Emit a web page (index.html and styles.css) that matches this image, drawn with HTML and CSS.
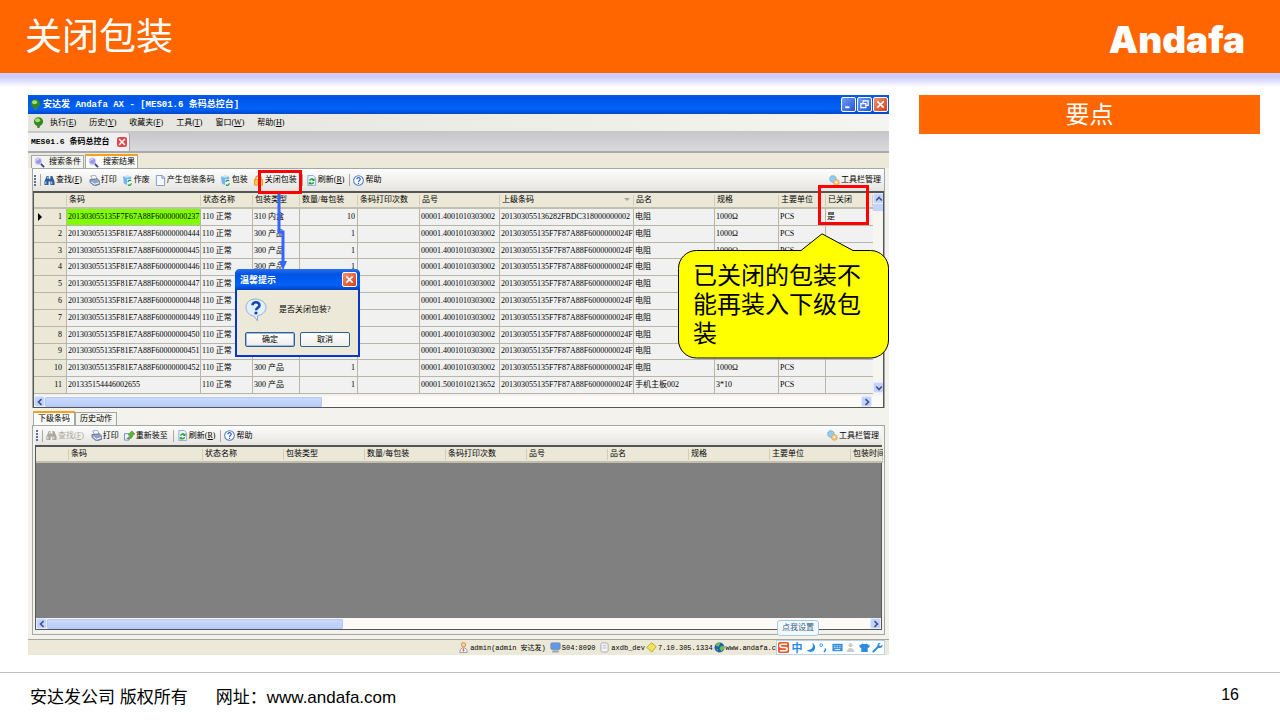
FILE: index.html
```html
<!DOCTYPE html>
<html lang="zh-CN">
<head>
    <meta charset="UTF-8">
    <meta name="viewport" content="width=device-width, initial-scale=1.0">
    <title>关闭包装</title>
    <link rel="stylesheet" href="styles.css">
</head>
<body>
    <!-- Icon definitions -->
    <svg class="defs" aria-hidden="true">
        <symbol id="i-leaf" viewBox="0 0 12 12"><ellipse cx="6" cy="5" rx="5" ry="4.8" fill="#2e8b1c"/><ellipse cx="5" cy="3.6" rx="2.8" ry="2.2" fill="#a5e06a"/><path d="M4 9h4l-1 3H5z" fill="#557744"/></symbol>
        <symbol id="i-lens" viewBox="0 0 12 12"><path d="M7 7l4 4" stroke="#3b3f9a" stroke-width="2"/><circle cx="4.8" cy="4.5" r="3.4" fill="#9c96ea" stroke="#d0cdf4" stroke-width="1.2"/><path d="M3 4a2 2 0 0 1 2-1.600" stroke="#fff" fill="none"/></symbol>
        <symbol id="i-find" viewBox="0 0 12 12"><path d="M3 1h2v3h2V1h2l2.500 6v4H7V7H5v4H.5V7z" fill="currentColor"/><path d="M2 7v3M8.500 7v3M4 2v2" stroke="#fff" stroke-width=".8"/></symbol>
        <symbol id="i-print" viewBox="0 0 12 12"><path d="M2 1l5-.5 2 4-5 1z" fill="#fff" stroke="#7d93bb" stroke-width=".8"/><path d="M1 5l8-1 3 3v3l-6 2-5-4z" fill="#8fa3c4" stroke="#4a5d7c" stroke-width=".7"/><path d="M2.500 7.500L6 10l5-1.500" fill="none" stroke="#fff"/></symbol>
        <symbol id="i-box" viewBox="0 0 12 12"><path d="M1 2l5-1.500L10 2v5l-5 4-3-2z" fill="#75b5ee"/><path d="M1 2l4 1 5-1-4-1.500z" fill="#c9e6ff"/><path d="M5.500 4.500H11V12H5.500z" fill="#e6f7ec"/><path d="M10 6.500a2 2 0 0 0-3.500 1M6.500 10.500a2 2 0 0 0 3.500-1.500" stroke="#21944a" fill="none" stroke-width="1.400"/></symbol>
        <symbol id="i-page" viewBox="0 0 12 12"><path d="M1.500.5H8L10.500 3v8.500h-9z" fill="#f4f9ff" stroke="#7b96c8"/><path d="M7.500.5V3.500h3" fill="#c7dcf7" stroke="#7b96c8"/></symbol>
        <symbol id="i-lock" viewBox="0 0 12 12"><path d="M3 6V4a3 3 0 0 1 6 0v2" fill="none" stroke="#d6a13c" stroke-width="1.500"/><rect x="1.500" y="5" width="9" height="6" fill="#ffc24a" stroke="#e29a28"/></symbol>
        <symbol id="i-refresh" viewBox="0 0 12 12"><path d="M2 .5h6L10.500 3v8.500H2z" fill="#e8f1fc" stroke="#8ea8d0"/><path d="M8.500 5.500a2.500 2.500 0 0 0-4.500.7M3.800 8.500a2.500 2.500 0 0 0 4.500-.7" stroke="#1ea033" fill="none" stroke-width="1.500"/><path d="M9.300 3.500v3H6.500zM3 10.800v-3h2.800z" fill="#1ea033"/></symbol>
        <symbol id="i-help" viewBox="0 0 12 12"><circle cx="6" cy="6" r="5.300" fill="#fff" stroke="#4c79c6" stroke-width="1.100"/><path d="M4.200 4.700c0-2.400 3.800-2.300 3.700 0C7.800 6 6 6 6 7.500M6 8.400v1.400" fill="none" stroke="#2b5fc0" stroke-width="1.300"/></symbol>
        <symbol id="i-gears" viewBox="0 0 12 12"><circle cx="4.300" cy="4.300" r="3.600" fill="#8fcdf2" stroke="#5ba5d8" stroke-dasharray="1.600 .8"/><circle cx="8" cy="8" r="3.200" fill="#f3c57c" stroke="#d49a48" stroke-dasharray="1.600 .8"/><circle cx="8" cy="8" r="1.100" fill="#fff"/></symbol>
        <symbol id="i-move" viewBox="0 0 12 12"><path d="M.5 4h5v7h-5z" fill="#eef5ff" stroke="#6887bd"/><path d="M3 9c3 0 4-2 4-4H5l3.500-4L12 4.500h-2C10 8 7 10.500 3 9z" fill="#59bb2c" stroke="#2f8116" stroke-width=".6"/></symbol>
        <symbol id="i-user" viewBox="0 0 12 12"><circle cx="6" cy="3" r="2.400" fill="#f7d3a5" stroke="#d88a3c"/><path d="M2 11.500c0-7 8-7 8 0z" fill="#f7f7ff" stroke="#8d97b8"/><path d="M6 6l1 3-1 2-1-2z" fill="#e2711f"/></symbol>
        <symbol id="i-pc" viewBox="0 0 12 12"><rect x="1" y="1" width="10" height="7" rx="1" fill="#5d9ae8" stroke="#7a8aa8"/><path d="M3 9h6l1 2.500H2z" fill="#9aa6ba"/></symbol>
        <symbol id="i-db" viewBox="0 0 12 12"><rect x="2" y="1" width="8" height="10" rx="2" fill="#f4f4f4" stroke="#a9a9ae"/><path d="M4 4h4M4 6.500h4" stroke="#b6b9c4"/></symbol>
        <symbol id="i-tag" viewBox="0 0 12 12"><path d="M6 .8L11.200 5 6.500 11 .8 6z" fill="#eee55c" stroke="#b6a72c"/></symbol>
        <symbol id="i-globe" viewBox="0 0 12 12"><circle cx="6" cy="6" r="5.500" fill="#1f5fae"/><path d="M2 3c2-3 5-2 5-1L5 5 3 5zM7 5l4-1v4l-3 2-2-3zM2 7l2 1v2z" fill="#6cc04c"/></symbol>
        <symbol id="i-left" viewBox="0 0 8 8"><path d="M5.500 1.200L2.500 4l3 2.800" fill="none" stroke="#3d5485" stroke-width="1.600"/></symbol>
        <symbol id="i-right" viewBox="0 0 8 8"><path d="M2.500 1.200L5.500 4l-3 2.800" fill="none" stroke="#3d5485" stroke-width="1.600"/></symbol>
        <symbol id="i-up" viewBox="0 0 8 8"><path d="M1.200 5.500L4 2.500l2.800 3" fill="none" stroke="#3d5485" stroke-width="1.600"/></symbol>
        <symbol id="i-down" viewBox="0 0 8 8"><path d="M1.200 2.500L4 5.500l2.800-3" fill="none" stroke="#3d5485" stroke-width="1.600"/></symbol>
        <symbol id="i-close" viewBox="0 0 12 12"><path d="M2.500 2.500l7 7M9.500 2.500l-7 7" stroke="#fff" stroke-width="1.800"/></symbol>
        <symbol id="i-min" viewBox="0 0 12 12"><path d="M2.500 9h4.500" stroke="#fff" stroke-width="2"/></symbol>
        <symbol id="i-restore" viewBox="0 0 12 12"><path d="M4.500 4V2h5.500v5H8M2 5h5.500v4.500H2z" fill="none" stroke="#fff" stroke-width="1.300"/></symbol>
    </svg>

    <header class="slide-header">
        <h1>关闭包装</h1>
        <span class="brand">Andafa</span>
    </header>

    <main class="slide-body">
        <section class="app">
            <div class="titlebar">
                <svg class="icon"><use href="#i-leaf"/></svg>
                <span class="app-title">安达发 Andafa AX - [MES01.6 条码总控台]</span>
                <button class="win-btn" aria-label="最小化"><svg><use href="#i-min"/></svg></button>
                <button class="win-btn" aria-label="还原"><svg><use href="#i-restore"/></svg></button>
                <button class="win-btn close" aria-label="关闭"><svg><use href="#i-close"/></svg></button>
            </div>

            <nav class="menubar">
                <svg class="icon"><use href="#i-leaf"/></svg>
                <button>执行(<u>E</u>)</button>
                <button>历史(<u>Y</u>)</button>
                <button>收藏夹(<u>F</u>)</button>
                <button>工具(<u>T</u>)</button>
                <button>窗口(<u>W</u>)</button>
                <button>帮助(<u>H</u>)</button>
            </nav>

            <div class="doc-tabs">
                <div class="doc-tab">
                    <span>MES01.6 条码总控台</span>
                    <button class="tab-close" aria-label="关闭标签"><svg><use href="#i-close"/></svg></button>
                </div>
            </div>

            <div class="view-tabs">
                <button class="tab"><svg class="icon"><use href="#i-lens"/></svg>搜索条件</button>
                <button class="tab active"><svg class="icon"><use href="#i-lens"/></svg>搜索结果</button>
            </div>

            <div class="panel">
                <div class="toolbar">
                    <span class="grip"></span>
                    <span class="sep"></span>
                    <button class="find"><svg class="icon"><use href="#i-find"/></svg>查找(<u>F</u>)</button>
                    <button><svg class="icon"><use href="#i-print"/></svg>打印</button>
                    <button><svg class="icon"><use href="#i-box"/></svg>作废</button>
                    <button><svg class="icon"><use href="#i-page"/></svg>产生包装条码</button>
                    <button><svg class="icon"><use href="#i-box"/></svg>包装</button>
                    <button><svg class="icon"><use href="#i-lock"/></svg>关闭包装</button>
                    <span class="sep"></span>
                    <button><svg class="icon"><use href="#i-refresh"/></svg>刷新(<u>R</u>)</button>
                    <span class="sep"></span>
                    <button><svg class="icon"><use href="#i-help"/></svg>帮助</button>
                    <button class="manage"><svg class="icon"><use href="#i-gears"/></svg>工具栏管理</button>
                </div>
                <div class="grid">
                    <div class="grid-main">
                        <table class="data">
                            <colgroup>
                                <col class="c-no"><col class="c-code"><col class="c-state"><col class="c-type"><col class="c-qty"><col class="c-print">
                                <col class="c-item"><col class="c-parent"><col class="c-name"><col class="c-spec"><col class="c-unit"><col class="c-closed">
                            </colgroup>
                            <thead>
                                <tr><th></th><th>条码</th><th>状态名称</th><th>包装类型</th><th>数量/每包装</th><th>条码打印次数</th><th>品号</th><th class="sorted">上级条码</th><th>品名</th><th>规格</th><th>主要单位</th><th>已关闭</th></tr>
                            </thead>
                            <tbody>
                                <tr class="current"><td>1</td><td>201303055135F7F67A88F60000000237</td><td>110 正常</td><td>310 内盒</td><td>10</td><td></td><td>00001.4001010303002</td><td>201303055136282FBDC318000000002</td><td>电阻</td><td>1000Ω</td><td>PCS</td><td>是</td></tr>
                                <tr><td>2</td><td>201303055135F81E7A88F60000000444</td><td>110 正常</td><td>300 产品</td><td>1</td><td></td><td>00001.4001010303002</td><td>201303055135F7F87A88F6000000024F</td><td>电阻</td><td>1000Ω</td><td>PCS</td><td></td></tr>
                                <tr><td>3</td><td>201303055135F81E7A88F60000000445</td><td>110 正常</td><td>300 产品</td><td>1</td><td></td><td>00001.4001010303002</td><td>201303055135F7F87A88F6000000024F</td><td>电阻</td><td>1000Ω</td><td>PCS</td><td></td></tr>
                                <tr><td>4</td><td>201303055135F81E7A88F60000000446</td><td>110 正常</td><td>300 产品</td><td>1</td><td></td><td>00001.4001010303002</td><td>201303055135F7F87A88F6000000024F</td><td>电阻</td><td>1000Ω</td><td>PCS</td><td></td></tr>
                                <tr><td>5</td><td>201303055135F81E7A88F60000000447</td><td>110 正常</td><td>300 产品</td><td>1</td><td></td><td>00001.4001010303002</td><td>201303055135F7F87A88F6000000024F</td><td>电阻</td><td>1000Ω</td><td>PCS</td><td></td></tr>
                                <tr><td>6</td><td>201303055135F81E7A88F60000000448</td><td>110 正常</td><td>300 产品</td><td>1</td><td></td><td>00001.4001010303002</td><td>201303055135F7F87A88F6000000024F</td><td>电阻</td><td>1000Ω</td><td>PCS</td><td></td></tr>
                                <tr><td>7</td><td>201303055135F81E7A88F60000000449</td><td>110 正常</td><td>300 产品</td><td>1</td><td></td><td>00001.4001010303002</td><td>201303055135F7F87A88F6000000024F</td><td>电阻</td><td>1000Ω</td><td>PCS</td><td></td></tr>
                                <tr><td>8</td><td>201303055135F81E7A88F60000000450</td><td>110 正常</td><td>300 产品</td><td>1</td><td></td><td>00001.4001010303002</td><td>201303055135F7F87A88F6000000024F</td><td>电阻</td><td>1000Ω</td><td>PCS</td><td></td></tr>
                                <tr><td>9</td><td>201303055135F81E7A88F60000000451</td><td>110 正常</td><td>300 产品</td><td>1</td><td></td><td>00001.4001010303002</td><td>201303055135F7F87A88F6000000024F</td><td>电阻</td><td>1000Ω</td><td>PCS</td><td></td></tr>
                                <tr><td>10</td><td>201303055135F81E7A88F60000000452</td><td>110 正常</td><td>300 产品</td><td>1</td><td></td><td>00001.4001010303002</td><td>201303055135F7F87A88F6000000024F</td><td>电阻</td><td>1000Ω</td><td>PCS</td><td></td></tr>
                                <tr><td>11</td><td>201335154446002655</td><td>110 正常</td><td>300 产品</td><td>1</td><td></td><td>00001.5001010213652</td><td>201303055135F7F87A88F6000000024F</td><td>手机主板002</td><td>3*10</td><td>PCS</td><td></td></tr>
                            </tbody>
                        </table>
                        <div class="vscroll">
                            <button aria-label="向上"><svg><use href="#i-up"/></svg></button>
                            <span class="vthumb"></span>
                            <button aria-label="向下"><svg><use href="#i-down"/></svg></button>
                        </div>
                    </div>
                    <div class="hscroll upper">
                        <button aria-label="向左"><svg><use href="#i-left"/></svg></button>
                        <div class="track"><span class="thumb"></span></div>
                        <button aria-label="向右"><svg><use href="#i-right"/></svg></button>
                    </div>
                </div>
            </div>

            <div class="sub-tabs">
                <button class="tab active">下级条码</button>
                <button class="tab">历史动作</button>
            </div>

            <div class="panel lower">
                <div class="toolbar">
                    <span class="grip"></span>
                    <span class="sep"></span>
                    <button class="find" disabled><svg class="icon"><use href="#i-find"/></svg>查找(<u>F</u>)</button>
                    <button><svg class="icon"><use href="#i-print"/></svg>打印</button>
                    <button><svg class="icon"><use href="#i-move"/></svg>重新装至</button>
                    <span class="sep"></span>
                    <button><svg class="icon"><use href="#i-refresh"/></svg>刷新(<u>R</u>)</button>
                    <span class="sep"></span>
                    <button><svg class="icon"><use href="#i-help"/></svg>帮助</button>
                    <button class="manage"><svg class="icon"><use href="#i-gears"/></svg>工具栏管理</button>
                </div>
                <div class="grid">
                    <table class="data">
                        <colgroup><col class="d-no"><col class="d-code"><col><col><col><col><col><col><col><col><col class="d-last"></colgroup>
                        <thead>
                            <tr><th></th><th>条码</th><th>状态名称</th><th>包装类型</th><th>数量/每包装</th><th>条码打印次数</th><th>品号</th><th>品名</th><th>规格</th><th>主要单位</th><th>包装时间</th></tr>
                        </thead>
                    </table>
                    <div class="empty"></div>
                    <div class="hscroll">
                        <button aria-label="向左"><svg><use href="#i-left"/></svg></button>
                        <div class="track"><span class="thumb"></span></div>
                        <button aria-label="向右"><svg><use href="#i-right"/></svg></button>
                    </div>
                </div>
            </div>

            <div class="statusbar">
                <span><svg class="icon"><use href="#i-user"/></svg>admin(admin 安达发)</span>
                <span><svg class="icon"><use href="#i-pc"/></svg>S04:8090</span>
                <span><svg class="icon"><use href="#i-db"/></svg>axdb_dev</span>
                <span class="tight"><svg class="icon"><use href="#i-tag"/></svg>7.10.305.1334</span>
                <span class="tight"><svg class="icon"><use href="#i-globe"/></svg>www.andafa.c</span>
            </div>

            <!-- Input method bar floating over the status bar -->
            <div class="ime">
                <svg viewBox="0 0 12 12"><rect width="12" height="12" rx="2" fill="#f0542a"/><path d="M10 2.500H4.500Q2 2.500 2 4.200 2 6 5 6h2.500Q10 6 10 7.800 10 9.500 7 9.500H2" fill="none" stroke="#fff" stroke-width="1.600"/></svg>
                <span>中</span>
                <svg viewBox="0 0 12 12"><path d="M8 1c2 5-1 8-6 8 4 4 10 1 9-4-.3-2-1.500-3.300-3-4z" fill="#2b8be0"/></svg>
                <svg viewBox="0 0 12 12"><circle cx="3.500" cy="3.500" r="1.500" fill="none" stroke="#2b8be0"/><path d="M8 7v2l-1.500 2" fill="none" stroke="#2b8be0" stroke-width="1.600"/></svg>
                <svg viewBox="0 0 12 12"><rect x=".5" y="2" width="11" height="8" fill="#2b8be0"/><path d="M2 4.200h8M2 6.200h8" stroke="#fff" stroke-dasharray="1 .8"/><path d="M3 8.300h6" stroke="#fff"/></svg>
                <svg viewBox="0 0 12 12"><circle cx="6" cy="3.500" r="2.300" fill="#ccc"/><path d="M2 11c0-6 8-6 8 0z" fill="#ccc"/></svg>
                <svg viewBox="0 0 12 12"><path d="M4 1.500q2 1.500 4 0L12 4l-1.500 2.500L9.500 6v5h-7V6l-1 .5L0 4z" fill="#2b8be0"/></svg>
                <svg viewBox="0 0 12 12"><path d="M1.500 10.500L7 5" stroke="#2b8be0" stroke-width="2.200" stroke-linecap="round"/><path d="M9.500.8L7.800 2.600l.4 1.400 1.400.3 1.800-1.700c.8 3-1.900 4.900-4.400 3.600C4.700 3.300 6.600.3 9.500.8z" fill="#2b8be0"/></svg>
            </div>
            <div class="ime-tip">点我设置</div>

            <!-- Confirmation dialog -->
            <div class="dialog" role="dialog" aria-label="温馨提示">
                <div class="dialog-title">
                    <span>温馨提示</span>
                    <button class="win-btn close" aria-label="关闭"><svg><use href="#i-close"/></svg></button>
                </div>
                <div class="dialog-text">
                    <svg viewBox="0 0 22 24"><path d="M10 1C4.500 1 1 5 1 9.500 1 14 5 18 9 18l3.500 5v-5.200C17 17 21 14 21 9.500 21 5 16.500 1 10 1z" fill="#e2effc" stroke="#8fb0d8"/><path d="M7.500 7.200c0-4 7-4 7 0 0 2.600-3.400 2.600-3.400 5" fill="none" stroke="#1648a8" stroke-width="2.600"/><circle cx="11" cy="15" r="1.600" fill="#1648a8"/></svg>
                    <span>是否关闭包装?</span>
                </div>
                <div class="dialog-buttons">
                    <button class="default">确定</button>
                    <button>取消</button>
                </div>
            </div>

            <!-- Annotations -->
            <div class="mark mark-button"></div>
            <div class="mark mark-column"></div>
            <svg class="arrow" viewBox="0 0 12 76"><path d="M5 0v38h4v30" fill="none" stroke="#3366ff" stroke-width="3"/><path d="M5 67h8l-4 9z" fill="#3366ff"/></svg>
            <div class="callout">
                <svg viewBox="0 0 211 126" aria-hidden="true"><path d="M18.500 17.500H123L144 .8 175 17.500H192.500a18 18 0 0 1 18 18V107a18 18 0 0 1-18 18H18.500a18 18 0 0 1-18-18V35.500a18 18 0 0 1 18-18z" fill="#ffff00" stroke="#000"/></svg>
                <p>已关闭的包装不能再装入下级包装</p>
            </div>
        </section>

        <aside class="points">
            <h2>要点</h2>
        </aside>
    </main>

    <footer class="slide-footer">
        <span>安达发公司 版权所有</span>
        <span>网址：<a href="http://www.andafa.com">www.andafa.com</a></span>
        <span class="page-no">16</span>
    </footer>
</body>
</html>
```

FILE: styles.css
```css
* {
    box-sizing: border-box;
}
body {
    margin: 0;
    min-height: 100vh;
    display: flex;
    flex-direction: column;
    font-family: "Liberation Sans", "Noto Sans CJK SC", sans-serif;
    background: #fff;
    color: #000;
}
h1, h2, p {
    margin: 0;
    font-weight: normal;
}
button {
    margin: 0;
    padding: 0;
    border: 0;
    background: none;
    font: inherit;
    color: inherit;
    white-space: nowrap;
}
svg {
    display: block;
    flex: none;
}
.defs {
    position: absolute;
    width: 0;
    height: 0;
}

/* Slide frame */
.slide-header {
    height: 73px;
    padding: 0 35px 0 25px;
    display: flex;
    align-items: center;
    justify-content: space-between;
    background: #ff6600;
    color: #fff;
}
.slide-header h1 {
    padding-bottom: 4px;
    font-family: "Noto Sans CJK SC", sans-serif;
    font-size: 37px;
    line-height: 69px;
}
.brand {
    padding-top: 5px;
    font-family: Inter, sans-serif;
    font-size: 37px;
    font-weight: 900;
}
.slide-body {
    flex: 1;
    display: flex;
    gap: 30px;
    padding: 22px 20px 17px 28px;
    background: linear-gradient(#ccccff, #ccccff 4px, #fff 14px) no-repeat;
}
.points {
    flex: 341 1 0;
}
.points h2 {
    height: 39px;
    border: 4px solid #ff6a08;
    background: #ff6600;
    color: #fff;
    font-size: 24px;
    line-height: 31px;
    text-align: center;
}
.slide-footer {
    height: 48px;
    padding: 0 41px 3px 30px;
    display: flex;
    align-items: center;
    gap: 28px;
    border-top: 1px solid #c0c0c0;
    font-size: 17px;
}
.slide-footer a {
    color: inherit;
    text-decoration: none;
}
.page-no {
    margin-left: auto;
    font-size: 16px;
}

/* Application window */
.app {
    position: relative;
    flex: 861 1 0;
    min-width: 0;
    display: flex;
    flex-direction: column;
    background: #f3f2ec;
    font-family: "Liberation Serif", "Noto Sans CJK SC", serif;
    font-size: 8px;
    line-height: 12px;
}
.icon {
    width: 11px;
    height: 11px;
}
.titlebar {
    height: 19px;
    padding: 0 1px 0 2px;
    display: flex;
    align-items: center;
    gap: 1px;
    background: linear-gradient(#0a5be8, #0054e3 3px, #0062fa 14px, #0048c8);
    color: #fff;
}
.app-title {
    flex: 1;
    padding-left: 1px;
    font-family: "Liberation Mono", "Noto Sans CJK SC", monospace;
    font-size: 9px;
    font-weight: bold;
}
.win-btn {
    width: 15px;
    height: 15px;
    padding: 1px;
    border: 1px solid #fff;
    border-radius: 2px;
    background: linear-gradient(135deg, #6f9cf4, #2257d8);
}
.win-btn svg {
    width: 11px;
    height: 11px;
}
.win-btn.close {
    background: linear-gradient(135deg, #f09070, #d8401c);
}
.menubar {
    height: 17px;
    padding-left: 5px;
    display: flex;
    align-items: center;
    gap: 13px;
    background: linear-gradient(90deg, #e4e3dc, #f4f5f0);
}
.menubar .icon {
    margin-right: -7px;
}
.doc-tabs {
    height: 22px;
    display: flex;
    align-items: flex-end;
    border-bottom: 2px solid #a9a9b3;
    background: linear-gradient(#c6c6ca, #dadadd);
}
.doc-tab {
    height: 18px;
    padding: 0 2px 0 3px;
    display: flex;
    align-items: center;
    gap: 8px;
    border-right: 1px solid #a5a5ad;
    border-radius: 0 3px 0 0;
    background: #f0f0f0;
    font-family: "Liberation Mono", "Noto Sans CJK SC", monospace;
    font-weight: bold;
}
.tab-close {
    width: 10px;
    height: 10px;
    border-radius: 2px;
    background: #e04848;
}
.tab-close svg {
    width: 10px;
    height: 10px;
}
.view-tabs, .sub-tabs {
    display: flex;
    align-items: flex-end;
}
.view-tabs {
    height: 15px;
    padding-left: 3px;
    gap: 1px;
    background: #ece9d8;
}
.sub-tabs {
    height: 17px;
    padding: 2px 0 0 5px;
}
.tab {
    height: 13px;
    padding: 0 4px;
    display: flex;
    align-items: center;
    gap: 4px;
    border: 1px solid #9fa9a9;
    border-bottom: 0;
    background: #f4f3ee;
}
.view-tabs .tab {
    padding: 0 2px;
}
.tab.active {
    height: 14px;
    border-top: 2px solid #f9a01b;
    background: #fcfcfa;
}
.panel {
    margin: 0 4px;
    border: 1px solid #a0a8a8;
    border-bottom: 0;
}
.panel.lower {
    flex: 1;
    margin-bottom: 4px;
    padding: 0 2px 4px 2px;
    border-bottom: 1px solid #a0a8a8;
    display: flex;
    flex-direction: column;
}
.toolbar {
    height: 22px;
    padding: 0 3px 0 1px;
    display: flex;
    align-items: center;
    gap: 5px;
    background: linear-gradient(#fdfdfd, #e6e4df);
}
.lower .toolbar {
    height: 19px;
}
.toolbar button {
    display: flex;
    align-items: center;
}
.toolbar .icon {
    margin-right: 1px;
}
.toolbar .find {
    margin-right: 2px;
}
.find .icon {
    color: #2a5b9e;
}
.find:disabled,
.find:disabled .icon {
    color: #aaa89c;
}
.toolbar .manage {
    margin-left: auto;
}
.grip {
    width: 2px;
    height: 11px;
    margin-right: -1px;
    background: repeating-linear-gradient(#5f6f98, #5f6f98 2px, transparent 2px, transparent 3px);
}
.sep {
    width: 1px;
    height: 12px;
    margin-right: -2px;
    background: #a8a8a4;
}

/* Data grid */
.grid {
    display: flex;
    flex-direction: column;
    border: 1px solid #555;
    border-top-width: 2px;
}
.lower .grid {
    flex: 1;
}
.grid-main {
    display: flex;
    height: 203px;
    overflow: hidden;
    background: #f1f1f1;
}
.data {
    flex: 1;
    width: 100%;
    min-width: 0;
    height: 201px;
    table-layout: fixed;
    border-collapse: separate;
    border-spacing: 0;
}
.lower .data {
    flex: none;
    height: auto;
}
.data th {
    height: 16px;
    padding: 0 2px;
    border-bottom: 2px solid #c3bfae;
    background: #ebe8d8 linear-gradient(#d0cdbc, #d0cdbc) right 2px / 1px 11px no-repeat;
    font-weight: normal;
    line-height: 12px;
    text-align: left;
    white-space: nowrap;
    overflow: hidden;
}
.data td {
    padding: 0 1px;
    border-right: 1px solid #b9b6a8;
    border-bottom: 1px solid #b9b6a8;
    line-height: 12px;
    white-space: nowrap;
    overflow: hidden;
}
.data td:nth-child(5) {
    padding-right: 2px;
    text-align: right;
}
.data td:last-child {
    border-right: 0;
}
.data td:first-child {
    padding-right: 4px;
    background: #ebe8d8;
    text-align: right;
}
.data .current td:nth-child(2) {
    background: #80ff00;
}
.data .current td:first-child::before {
    content: "";
    float: left;
    margin: 2px 0 0 3px;
    border: 4px solid transparent;
    border-left-color: #000;
    border-right: 0;
}
.sorted::after {
    content: "";
    float: right;
    margin: 4px 2px 0 0;
    border: 3px solid transparent;
    border-top-color: #aaa899;
    border-bottom: 0;
}
.c-no { width: 33px; }
.c-code { width: 134px; }
.c-state { width: 52px; }
.c-type { width: 47px; }
.c-qty { width: 58px; }
.c-print { width: 62px; }
.c-item { width: 80px; }
.c-parent { width: 134px; }
.c-name { width: 81px; }
.c-spec { width: 64px; }
.c-unit { width: 47px; }
.c-closed { width: 47px; }
.d-no { width: 33px; }
.d-code { width: 134px; }
.lower col:not([class]) { width: 81px; }
.d-last { width: 32px; }
.empty {
    flex: 1;
    background: #808080;
}
.vscroll {
    width: 11px;
    display: flex;
    flex-direction: column;
    background: #f6f5f0;
}
.vscroll button, .hscroll button {
    width: 11px;
    height: 11px;
    display: flex;
    align-items: center;
    justify-content: center;
    border: 1px solid #e4ebfd;
    border-radius: 2px;
    background: #c3d3fd;
}
.vscroll svg, .hscroll svg {
    width: 8px;
    height: 8px;
}
.vthumb {
    height: 7px;
    margin-bottom: auto;
    background: #c3d3fd;
}
.vscroll button:last-child {
    margin-bottom: 3px;
}
.hscroll {
    height: 11px;
    display: flex;
    align-items: center;
    background: #fbfaf6;
}
.hscroll.upper {
    padding-right: 11px;
}
.track {
    flex: 1;
}
.thumb {
    display: block;
    width: 34%;
    height: 10px;
    border: 1px solid #b4c8f6;
    border-radius: 1px;
    background: linear-gradient(#cad9fe, #b9cdfb);
}
.lower .thumb {
    width: 36%;
}
.statusbar {
    height: 16px;
    padding: 0 113px 0 0;
    display: flex;
    align-items: center;
    justify-content: flex-end;
    gap: 4px;
    border-top: 1px solid #a9a695;
    background: #ece9d8;
    font-family: "Liberation Mono", "Noto Sans CJK SC", monospace;
    font-size: 7px;
}
.statusbar span {
    display: flex;
    align-items: center;
    white-space: nowrap;
}
.statusbar .tight {
    margin-left: -3px;
}
.statusbar .icon {
    margin-right: 1px;
}

/* Input method bar */
.ime {
    position: absolute;
    right: 4px;
    bottom: 0;
    width: 109px;
    height: 15px;
    padding: 0 1px;
    display: flex;
    align-items: center;
    justify-content: space-between;
    border: 1px solid #b9d3e8;
    background: #fff;
    color: #2b8be0;
    font-size: 11px;
    font-weight: bold;
}
.ime svg {
    width: 11px;
    height: 11px;
}
.ime-tip {
    position: absolute;
    right: 70px;
    bottom: 19px;
    padding: 1px 4px;
    border: 1px solid #a9cbe2;
    border-radius: 3px;
    background: #f2f9fe;
    color: #35617e;
}

/* Dialog */
.dialog {
    position: absolute;
    left: 207px;
    top: 174px;
    width: 125px;
    border: 2px solid #0838c8;
    border-top: 0;
    border-radius: 5px 5px 0 0;
    background: #ece9d8;
}
.dialog-title {
    height: 21px;
    margin: 0 -2px;
    padding: 0 3px 0 5px;
    display: flex;
    align-items: center;
    justify-content: space-between;
    border-radius: 5px 5px 0 0;
    background: linear-gradient(#2a70f0, #0054e3 5px, #0060f8 16px, #0040c0);
    color: #fff;
    font-size: 9px;
    font-weight: bold;
}
.dialog-text {
    height: 40px;
    padding-left: 8px;
    display: flex;
    align-items: center;
    gap: 12px;
}
.dialog-text svg {
    width: 22px;
    height: 24px;
}
.dialog-buttons {
    padding: 2px 8px 8px;
    display: flex;
    gap: 5px;
}
.dialog-buttons button {
    flex: 1;
    height: 15px;
    border: 1px solid #2f5f92;
    border-radius: 2px;
    background: linear-gradient(#fff, #eeede6);
    line-height: 12px;
}
.dialog-buttons .default {
    box-shadow: inset 0 0 0 1px #9db9ea;
}

/* Annotations */
.mark {
    position: absolute;
    border: 3px solid #ff0000;
}
.mark-button {
    left: 230px;
    top: 75px;
    width: 44px;
    height: 24px;
}
.mark-column {
    right: 20px;
    top: 90px;
    width: 51px;
    height: 40px;
}
.arrow {
    position: absolute;
    left: 246px;
    top: 99px;
    width: 12px;
    height: 76px;
    overflow: visible;
}
.callout {
    position: absolute;
    right: 0;
    top: 138px;
    width: 211px;
    height: 126px;
    padding: 26px 14px 0 15px;
}
.callout svg {
    position: absolute;
    inset: 0;
    width: 211px;
    height: 126px;
}
.callout p {
    position: relative;
    font-family: "Noto Sans CJK SC", sans-serif;
    font-size: 24px;
    line-height: 29px;
}
```
